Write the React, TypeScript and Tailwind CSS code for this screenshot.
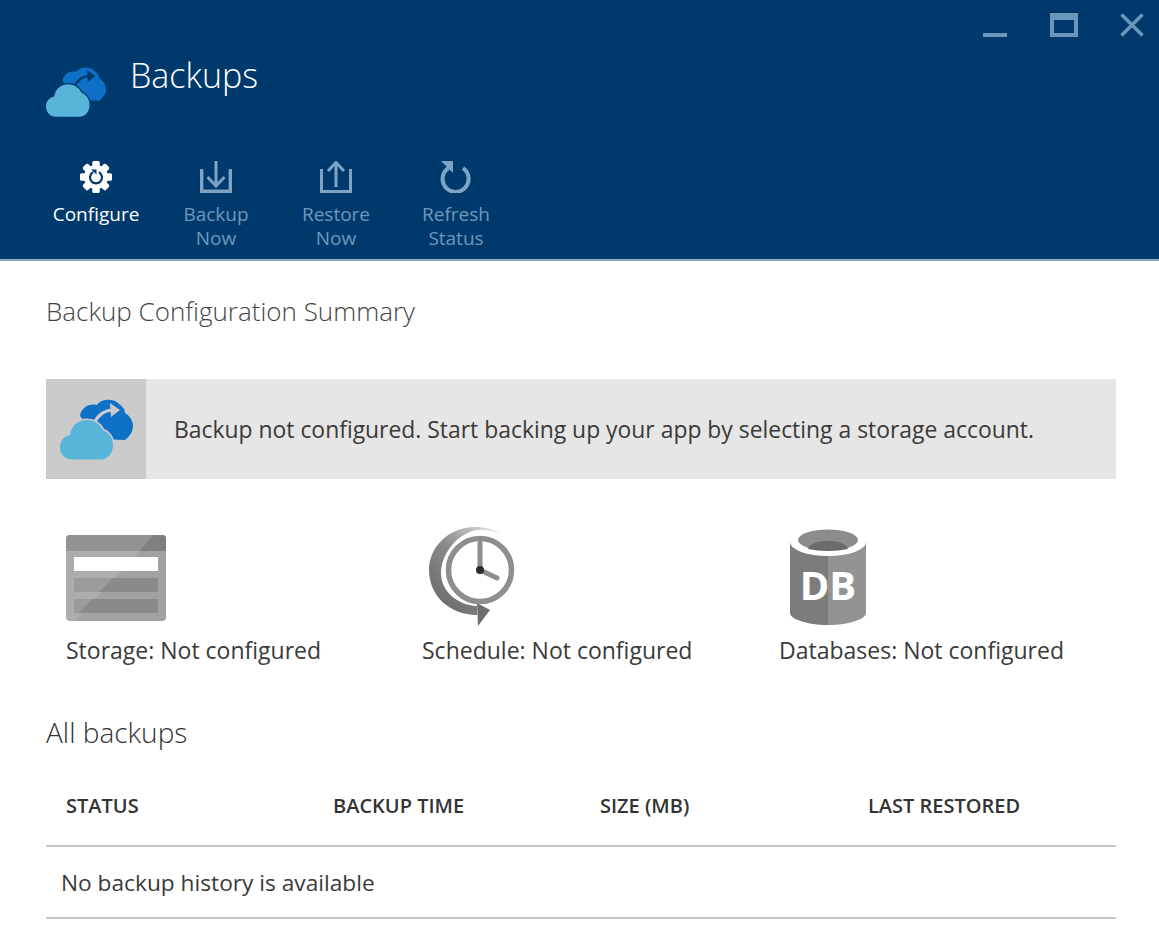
const ICON = "#7fa3c4"

function CloudIcon({ bg, className }: { bg: string; className: string }) {
  return (
    <svg viewBox="0 0 73 61" className={className}>
      <path
        d="M20 17C21 9 29 4 37 6C41 0 52-1 58 4C62 7 65 10 65 14C70 17 73 22 73 27C73 33 69 38 65 41L40 40Z"
        fill="#0f70c8"
      />
      <path d="M34 25C37 17 43 12 52 11" fill="none" stroke={bg} strokeWidth="3" />
      <path d="M50 4L60 11L51 18Z" fill={bg} />
      <path
        d="M12 60.5C5 60.5 0 55 0 48C0 42 4 37 10 36C11 27 18 21 27 21C34 21 40 25 43 31C48 33 53 38 53 46C53 54 48 60.5 41 60.5Z"
        fill="#59b4d9"
        stroke={bg}
        strokeWidth="3"
        paintOrder="stroke"
      />
    </svg>
  )
}

function GearIcon() {
  const teeth = [0, 45, 90, 135, 180, 225, 270, 315]
  return (
    <svg viewBox="0 0 32 32" className="h-8 w-8">
      {teeth.map((a) => (
        <rect key={a} x="12.5" y="0" width="7" height="32" rx="1.5" fill="#fff" transform={`rotate(${a} 16 16)`} />
      ))}
      <circle cx="16" cy="16" r="12" fill="#fff" />
      <path d="M13 11.2A6 6 0 1 0 19 11.2" fill="none" stroke="#003a6d" strokeWidth="2.2" />
      <path d="M11 8.5H16.5V13.5Z" fill="#003a6d" />
    </svg>
  )
}

function BackupIcon() {
  return (
    <svg viewBox="0 0 32 32" className="h-8 w-8">
      <path d="M1.7 8V30.3H30.3V8" fill="none" stroke={ICON} strokeWidth="3.4" />
      <path d="M16 0V23" stroke={ICON} strokeWidth="3" />
      <path d="M7.5 16L16 25L24.5 16" fill="none" stroke={ICON} strokeWidth="3" />
    </svg>
  )
}

function RestoreIcon() {
  return (
    <svg viewBox="0 0 32 32" className="h-8 w-8">
      <path d="M1.5 8V30.5H30.5V8" fill="none" stroke={ICON} strokeWidth="3" />
      <path d="M16 26V3" stroke={ICON} strokeWidth="3" />
      <path d="M8 10L16 1.5L24 10" fill="none" stroke={ICON} strokeWidth="3" />
    </svg>
  )
}

function RefreshIcon() {
  return (
    <svg viewBox="0 0 32 32" className="h-8 w-8">
      <path d="M23 7.2A13 13 0 1 1 8.5 7" fill="none" stroke={ICON} strokeWidth="4" />
      <path d="M1 0H13V12Z" fill={ICON} />
    </svg>
  )
}

function StorageIcon() {
  return (
    <svg viewBox="0 0 100 86" className="h-[86px] w-[100px]">
      <rect width="100" height="86" rx="4" fill="#adadad" />
      <path d="M9 86L74 16H100V82A4 4 0 0 1 96 86Z" fill="#a2a2a2" />
      <path d="M0 16V4A4 4 0 0 1 4 0H96A4 4 0 0 1 100 4V16Z" fill="#939393" />
      <path d="M74 16L87 0H96A4 4 0 0 1 100 4V16Z" fill="#7f7f7f" />
      <rect x="8" y="22" width="84" height="14" fill="#fff" />
      <rect x="8" y="43" width="84" height="14" fill="#9b9b9b" />
      <rect x="8" y="64" width="84" height="14" fill="#9b9b9b" />
      <path d="M47 43H92V57H33Z" fill="#8a8a8a" />
      <path d="M26.5 64H92V78H13Z" fill="#8a8a8a" />
    </svg>
  )
}

function ClockIcon() {
  return (
    <svg viewBox="0 0 90 100" className="h-[100px] w-[90px]">
      <defs>
        <linearGradient id="swoosh" x1="0.9" y1="0" x2="0.2" y2="0.9">
          <stop offset="0" stopColor="#e0e0e0" />
          <stop offset="0.5" stopColor="#8a8a8a" />
          <stop offset="1" stopColor="#6e6e6e" />
        </linearGradient>
      </defs>
      <path
        d="M74 8C64 2 56 0 46 0C20 0 0 20 0 43C0 68 20 88 48 88V79C28 78 12 64 12 46C12 26 30 5 49 3C58 2 66 4 74 8Z"
        fill="url(#swoosh)"
      />
      <path d="M48 76L61 83L49 99Z" fill="#6e6e6e" />
      <circle cx="51" cy="43" r="31.5" fill="none" stroke="#8e8e8e" strokeWidth="5.5" />
      <path d="M51 43V16" stroke="#8e8e8e" strokeWidth="5" strokeLinecap="round" />
      <path d="M51 43L68 51" stroke="#8e8e8e" strokeWidth="5" strokeLinecap="round" />
      <circle cx="51" cy="43" r="4" fill="#2b2b2b" />
    </svg>
  )
}

function DbIcon() {
  return (
    <svg viewBox="0 0 76 96" className="h-[96px] w-[76px]">
      <path d="M0 13V84C0 90 17 96 38 96V13Z" fill="#7c7c7c" />
      <path d="M76 13V84C76 90 59 96 38 96V13Z" fill="#939393" />
      <ellipse cx="38" cy="13" rx="38" ry="14" fill="#fff" />
      <ellipse cx="38" cy="11" rx="30" ry="10.5" fill="#8c8c8c" />
      <path d="M18 20C20 14 28 12 38 12C48 12 56 14 58 20C52 21 45 22 38 22C31 22 24 21 18 20Z" fill="#6c6c6c" />
      <text x="38" y="71" textAnchor="middle" fontFamily="'Open Sans', sans-serif" fontWeight="700" fontSize="40" fill="#fff">
        DB
      </text>
    </svg>
  )
}

const ACTIONS = [
  { icon: <GearIcon />, lines: ["Configure"], active: true },
  { icon: <BackupIcon />, lines: ["Backup", "Now"], active: false },
  { icon: <RestoreIcon />, lines: ["Restore", "Now"], active: false },
  { icon: <RefreshIcon />, lines: ["Refresh", "Status"], active: false },
]

const COLUMNS = ["STATUS", "BACKUP TIME", "SIZE (MB)", "LAST RESTORED"]

export default function App() {
  return (
    <div className="h-[951px] w-[1159px] overflow-hidden bg-white font-['Open_Sans',sans-serif] text-[#3a3a3a]">
      <header className="h-[261px] border-b-2 border-[#8fa9c0] bg-[#003a6d]">
        {/* window buttons */}
        <div className="h-[13px]" />
        <div className="flex items-start justify-end gap-[44px] pr-[15px]">
          <div className="mt-[20px] h-1 w-6 bg-[#6b96bb]" />
          <div className="-ml-[1px] h-6 w-7 border-[4px] border-t-[7px] border-[#6b96bb]" />
          <svg viewBox="0 0 24 24" className="-ml-[2px] h-6 w-6">
            <path d="M1.5 1.5L22.5 22.5M22.5 1.5L1.5 22.5" stroke="#6b96bb" strokeWidth="3.4" />
          </svg>
        </div>

        <div className="flex items-start pl-[46px] pt-[15px]">
          <CloudIcon bg="#003a6d" className="mt-[14px] h-[52px] w-[60px]" />
          <h1 className="ml-[24px] text-[34px] leading-[46px] font-light text-white">Backups</h1>
        </div>

        <div className="mt-[43px] flex pl-[36px]">
          {ACTIONS.map((a) => (
            <div key={a.lines[0]} className="flex w-[120px] flex-col items-center">
              {a.icon}
              <div className={`mt-[9px] text-center text-[19px] leading-6 ${a.active ? "text-white" : "text-[#6f97bb]"}`}>
                {a.lines.map((l) => (
                  <div key={l}>{l}</div>
                ))}
              </div>
            </div>
          ))}
        </div>
      </header>

      <main className="pl-[46px] pr-[43px]">
        <h2 className="mt-[30px] text-[26px] leading-10 font-light text-[#444]">Backup Configuration Summary</h2>

        <div className="mt-[48px] flex h-[100px] items-center bg-[#e6e6e6]">
          <div className="flex h-full w-[100px] items-center justify-center bg-[#cbcbcb]">
            <CloudIcon bg="#cbcbcb" className="h-[61px] w-[73px]" />
          </div>
          <p className="ml-[28px] pt-[2px] text-[22.9px] leading-8">
            Backup not configured. Start backing up your app by selecting a storage account.
          </p>
        </div>

        <div className="mt-[56px] grid grid-cols-[356px_357px_1fr] pl-[20px]">
          <div>
            <StorageIcon />
            <p className="mt-[13px] text-[23px] leading-8">Storage: Not configured</p>
          </div>
          <div>
            <div className="-mt-[8px] ml-[7px]">
              <ClockIcon />
            </div>
            <p className="mt-[7px] text-[23px] leading-8">Schedule: Not configured</p>
          </div>
          <div>
            <div className="-mt-[6px] ml-[11px]">
              <DbIcon />
            </div>
            <p className="mt-[9px] text-[23px] leading-8">Databases: Not configured</p>
          </div>
        </div>

        <h2 className="mt-[46px] text-[28px] leading-10 font-light text-[#333]">All backups</h2>

        <div className="mt-[34px] grid h-[40px] grid-cols-[267px_267px_268px_1fr] items-center pl-[20px] text-[20px] font-semibold text-[#333]">
          {COLUMNS.map((c) => (
            <div key={c}>{c}</div>
          ))}
        </div>
        <div className="mt-[19px] flex h-[74px] items-center border-y-2 border-[#c8c8c8] pl-[15px] pt-[2px] text-[22.7px]">
          No backup history is available
        </div>
      </main>
    </div>
  )
}
